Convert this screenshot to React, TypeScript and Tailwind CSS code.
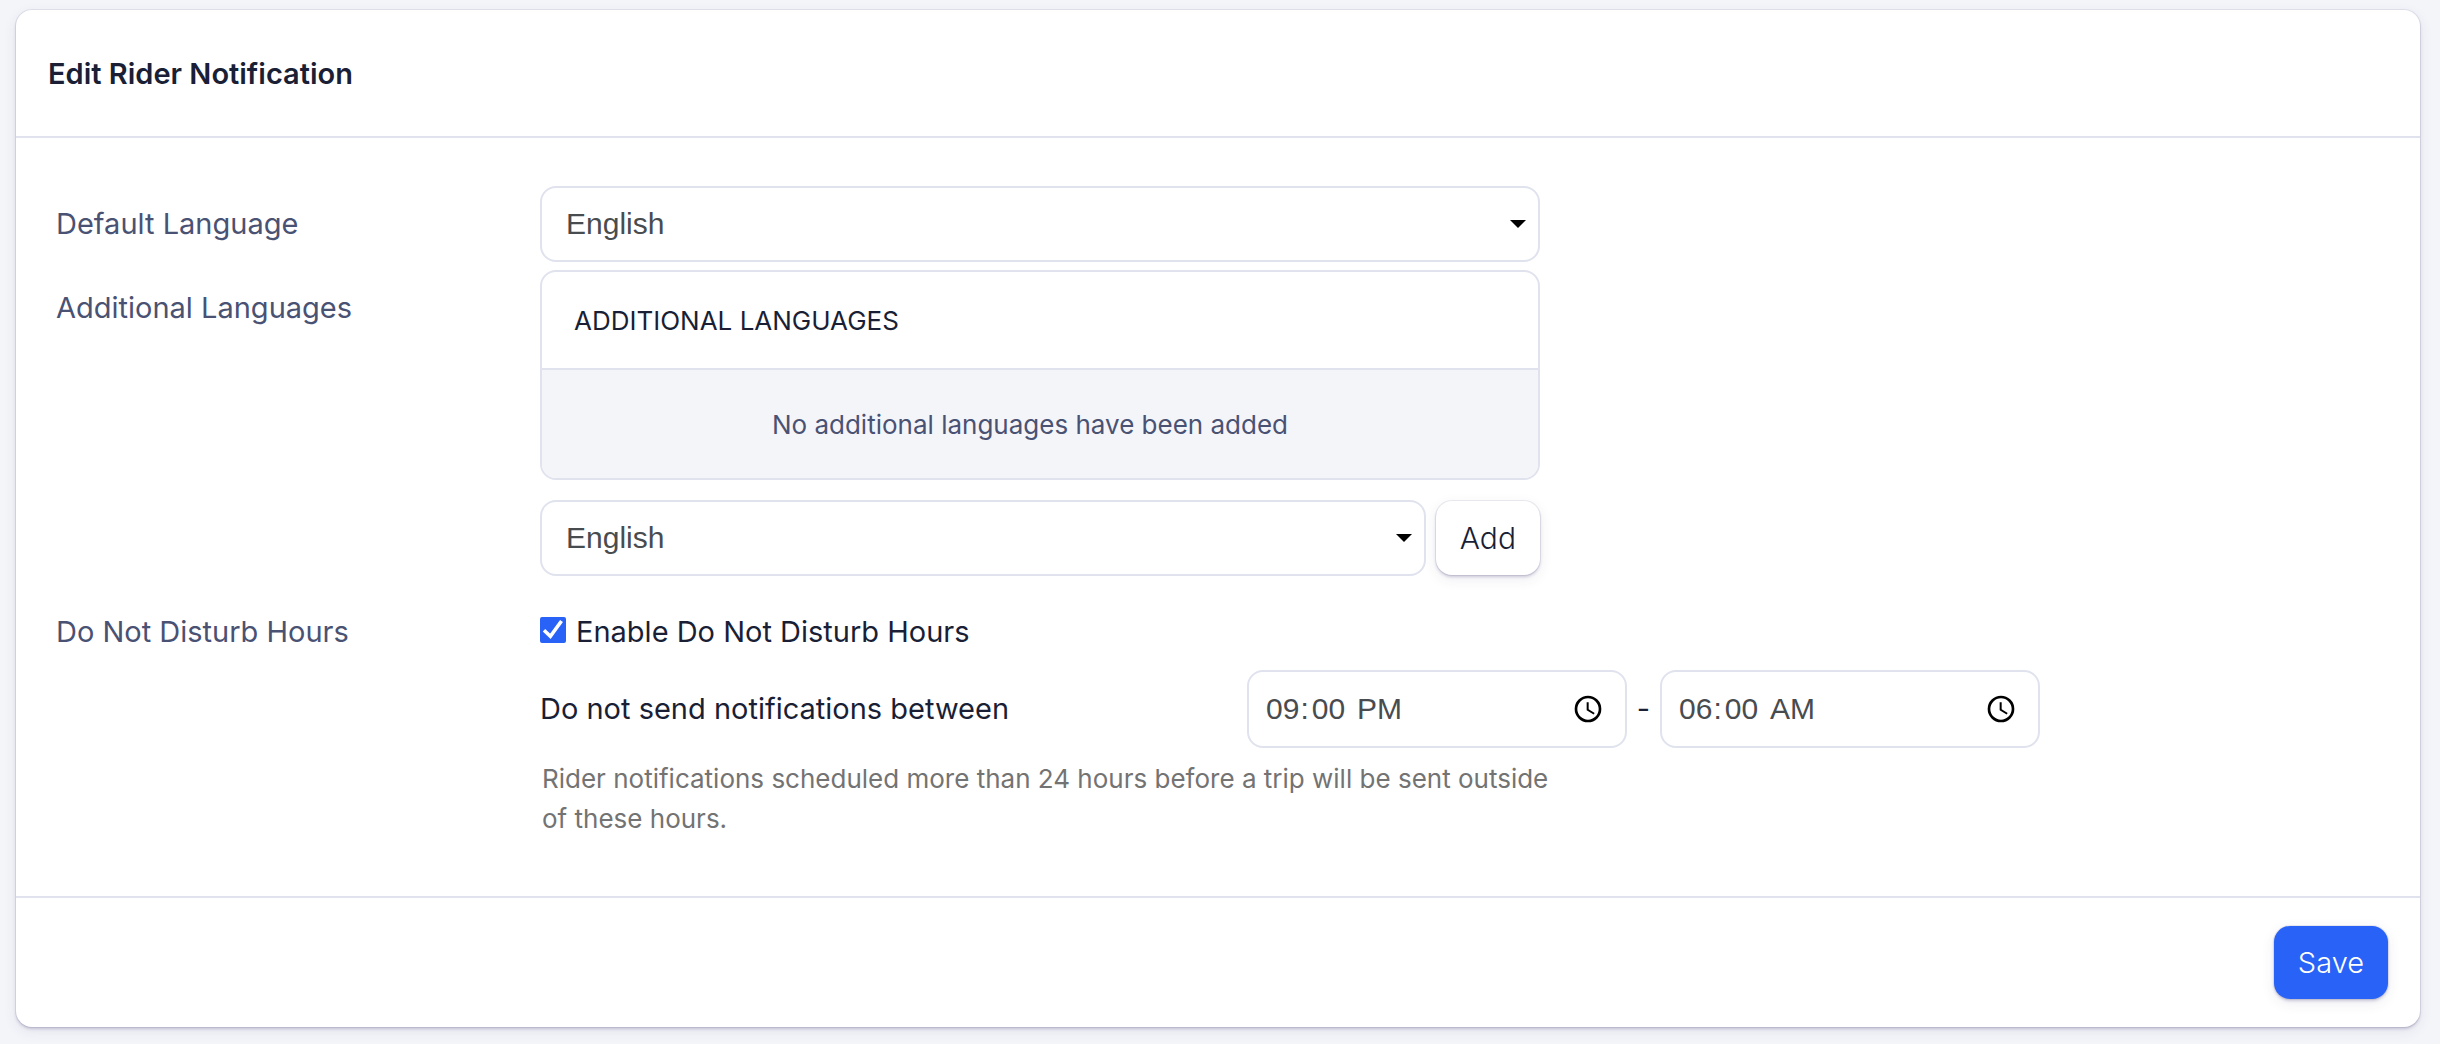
import type { ReactNode, SelectHTMLAttributes } from "react";

const label = "text-[29px] leading-10 text-[#4a5273]";
const field =
  "w-full appearance-none rounded-[16px] border-2 border-[#e0e3ee] bg-white font-['Liberation_Sans',Arial,sans-serif] text-[30px] leading-10 text-[#494c4f] outline-none";
const raised =
  "shadow-[0_0_0_1px_rgba(60,50,110,0.09),0_2px_3px_rgba(60,50,110,0.22),0_4px_14px_rgba(60,50,110,0.09)]";
const grid = "grid grid-cols-[484fr_1000fr_840fr] items-start";

function Select({ children, ...props }: SelectHTMLAttributes<HTMLSelectElement> & { children: ReactNode }) {
  return (
    <div className="relative min-w-0 flex-1">
      <select {...props} className={`${field} block h-[76px] pr-12 pl-6`}>
        {children}
      </select>
      <svg
        viewBox="0 0 16 8"
        aria-hidden="true"
        className="pointer-events-none absolute top-[34px] right-[14px] h-2 w-4 fill-black"
      >
        <path d="M0 0h16L8 8z" />
      </svg>
    </div>
  );
}

function TimeInput({ name, value }: { name: string; value: string }) {
  return (
    <div className="relative">
      <input
        type="time"
        aria-label={name}
        defaultValue={value}
        className={`${field} block h-[78px] px-4 [&::-webkit-calendar-picker-indicator]:opacity-0 [&::-webkit-datetime-edit-ampm-field]:ml-1 [&::-webkit-datetime-edit-minute-field]:ml-[2px]`}
      />
      <svg
        viewBox="0 0 24 24"
        aria-hidden="true"
        className="pointer-events-none absolute top-[23px] right-[23px] size-8 fill-black"
      >
        <path d="M12 2a10 10 0 1 0 0 20 10 10 0 0 0 0-20zm0 18a8 8 0 1 1 0-16 8 8 0 0 1 0 16z" />
        <path d="M12.5 7H11v6l5.25 3.15.75-1.23-4.5-2.67z" />
      </svg>
    </div>
  );
}

export default function App() {
  return (
    <main className="min-h-screen bg-[#f4f5f9] pt-[10px] pr-5 pb-[17px] pl-4 font-[Inter,'Liberation_Sans',sans-serif] text-[#1a1f36]">
      <form className={`rounded-[16px] bg-white ${raised}`}>
        <header className="border-b-2 border-[#e0e3ee] px-8 pt-11 pb-[42px]">
          <h1 className="text-[29px] leading-10 font-semibold">Edit Rider Notification</h1>
        </header>

        <div className="px-10 pt-12 pb-[57px]">
          <div className={grid}>
            <label htmlFor="default-language" className={`${label} pt-[18px]`}>
              Default Language
            </label>
            <Select id="default-language" defaultValue="en">
              <option value="en">English</option>
            </Select>
          </div>

          <div className={`${grid} mt-2`}>
            <label htmlFor="additional-language" className={`${label} pt-[18px]`}>
              Additional Languages
            </label>
            <div>
              <table className="w-full border-separate border-spacing-0 overflow-hidden rounded-[16px] border-2 border-[#e0e3ee]">
                <thead>
                  <tr>
                    <th className="border-b-2 border-[#e0e3ee] px-8 pt-[29px] pb-[27px] text-left text-[26px] leading-10 font-normal">
                      ADDITIONAL LANGUAGES
                    </th>
                  </tr>
                </thead>
                <tbody>
                  <tr>
                    <td className="bg-[#f4f5f9] pt-[35px] pr-5 pb-[33px] text-center text-[26px] leading-10 text-[#4a5273]">
                      No additional languages have been added
                    </td>
                  </tr>
                </tbody>
              </table>
              <div className="mt-5 flex items-center gap-[10px]">
                <Select id="additional-language" defaultValue="en">
                  <option value="en">English</option>
                </Select>
                <button
                  type="button"
                  className={`h-[74px] rounded-[16px] bg-white px-6 text-[30px] leading-10 font-light ${raised}`}
                >
                  Add
                </button>
              </div>
            </div>
          </div>

          <div className={`${grid} mt-9`}>
            <p className={label}>Do Not Disturb Hours</p>
            <div className="col-span-2">
              <label className="flex items-center gap-[10px] text-[29px] leading-10">
                <span className="relative mb-1 size-[26px]">
                  <input
                    type="checkbox"
                    defaultChecked
                    className="peer block size-[26px] appearance-none rounded-[2px] border-2 border-[#2962f6] checked:bg-[#2962f6]"
                  />
                  <svg
                    viewBox="0 0 26 26"
                    aria-hidden="true"
                    className="pointer-events-none absolute inset-0 hidden fill-none stroke-white stroke-[3.6] peer-checked:block"
                  >
                    <path d="M4 13.2l6.4 6L21.5 4" />
                  </svg>
                </span>
                Enable Do Not Disturb Hours
              </label>
              <div className="mt-[18px] grid grid-cols-[707fr_380fr_33px_380fr_340fr] items-center">
                <p className="text-[29px] leading-10">Do not send notifications between</p>
                <TimeInput name="Quiet hours start" value="21:00" />
                <span className="text-center text-[29px] leading-10">-</span>
                <TimeInput name="Quiet hours end" value="06:00" />
              </div>
              <p className="mt-[11px] max-w-[1020px] pl-[2px] text-[26px] leading-10 text-[#737373]">
                Rider notifications scheduled more than 24 hours before a trip will be sent outside of these hours.
              </p>
            </div>
          </div>
        </div>

        <footer className="flex justify-end border-t-2 border-[#e0e3ee] px-8 py-7">
          <button
            type="submit"
            className={`h-[73px] rounded-[16px] bg-[#2962f6] px-6 text-[29px] leading-10 font-light text-white ${raised}`}
          >
            Save
          </button>
        </footer>
      </form>
    </main>
  );
}
